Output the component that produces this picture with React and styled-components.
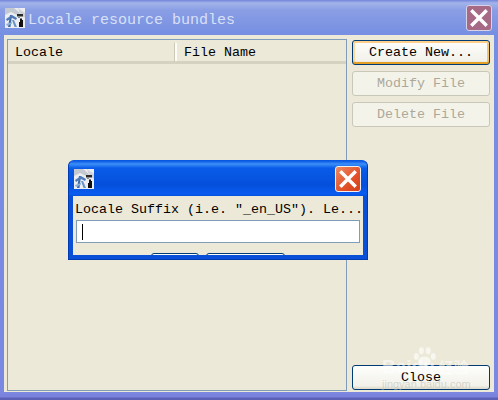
import React from "react";
import styled, { createGlobalStyle } from "styled-components";

const Global = createGlobalStyle`
  html, body {
    margin: 0;
    padding: 0;
    background: #7b8ee0;
  }
  * {
    box-sizing: border-box;
  }
`;

const AppIcon = () => (
  <svg width="20" height="20" viewBox="0 0 20 20">
    <rect width="20" height="20" fill="#eceef2" />
    <path d="M0 0h9l6 5-3 2-6-3-6 3z" fill="#c4c8d0" />
    <path d="M13 0l7 5v5l-5-4z" fill="#cfd2d9" />
    <path d="M3 19L5 7h2L5.5 19z" fill="#3f6ca8" />
    <path d="M1 11l6-4 5 3-1 2-4-2-5 3z" fill="#4f7cb8" />
    <path d="M7 12l2 0 3 7H9.5z" fill="#6a94c8" />
    <path d="M1 16l6-2v1.5L2 18z" fill="#8fb0d8" />
    <path d="M12 6h6v2.5h-6z" fill="#2a2a2a" />
    <path d="M15 10.5h2v1.5h1v7h-4v-5h1z" fill="#111" />
    <rect x="13" y="9" width="2" height="1" fill="#8a8a8a" />
  </svg>
);

const CloseIcon = () => (
  <svg width="20" height="20" viewBox="0 0 20 20">
    <path d="M3.5 3.5L16.5 16.5M16.5 3.5L3.5 16.5" stroke="#fff" strokeWidth="3.4" strokeLinecap="square" fill="none" />
  </svg>
);

const App = () => {
  return (
    <>
      <Global />
      <Frame>
        <TitleBar>
          <AppIcon />
          <TitleText>Locale resource bundles</TitleText>
          <MainClose>
            <CloseIcon />
          </MainClose>
        </TitleBar>
        <Body>
          <TablePanel>
            <TableHeader>
              <HeaderCell $width={169}>Locale</HeaderCell>
              <HeaderCell>File Name</HeaderCell>
            </TableHeader>
          </TablePanel>
          <Side>
            <Button $focused>Create New...</Button>
            <Button disabled>Modify File</Button>
            <Button disabled>Delete File</Button>
            <Spacer />
            <Button>Close</Button>
          </Side>
        </Body>
        <Dialog>
          <DialogTitle>
            <AppIcon />
            <DialogClose>
              <CloseIcon />
            </DialogClose>
          </DialogTitle>
          <DialogBody>
            <Prompt>Locale Suffix (i.e. "_en_US"). Le...</Prompt>
            <Field>
              <Caret />
            </Field>
            <DialogButtons>
              <ClippedButton $width={48} />
              <ClippedButton $width={79} />
            </DialogButtons>
          </DialogBody>
        </Dialog>
        <Watermark>
          <Paw viewBox="0 0 40 32">
            <ellipse cx="20" cy="23" rx="10" ry="8" />
            <ellipse cx="7" cy="15" rx="4" ry="5.5" />
            <ellipse cx="15" cy="6" rx="4" ry="5.5" />
            <ellipse cx="26" cy="6" rx="4" ry="5.5" />
            <ellipse cx="34" cy="15" rx="4" ry="5.5" />
          </Paw>
          <Brand>Baidu<BrandCjk>经验</BrandCjk></Brand>
          <BrandUrl>jingyan.baidu.com</BrandUrl>
        </Watermark>
      </Frame>
    </>
  );
};

const Frame = styled.div`
  position: relative;
  width: 498px;
  height: 400px;
  overflow: hidden;
  padding: 0 4px 8px;
  display: flex;
  flex-direction: column;
  background: linear-gradient(to bottom, #7285da 0, #a3b3ea 3px, #8a9ee4 10px, #768fe2 34px, #7a88e2 392px, #7a80dc 397px, #5c60b4 398px, #5c60b4 400px);
  font-family: "Liberation Mono", monospace;
  font-size: 13.33px;
  color: #000;
`;

const TitleBar = styled.div`
  height: 35px;
  flex: none;
  display: flex;
  align-items: center;
  padding: 1px 2px 0 1px;
`;

const TitleText = styled.div`
  margin: 4px 0 0 3px;
  font-size: 15px;
  color: #d8e0f6;
  white-space: nowrap;
`;

const MainClose = styled.div`
  margin-left: auto;
  width: 26px;
  height: 26px;
  display: flex;
  align-items: center;
  justify-content: center;
  border: 1px solid #d8d4e6;
  border-radius: 3px;
  background: #a66a86;
`;

const Body = styled.div`
  flex: 1;
  display: flex;
  background: #ece9d8;
  padding: 4px 4px 1px 3px;
`;

const TablePanel = styled.div`
  width: 341px;
  height: 352px;
  border: 1px solid #7f9db9;
`;

const TableHeader = styled.div`
  display: flex;
  height: 24px;
  border-bottom: 3px solid #d6d2c2;
`;

const HeaderCell = styled.div`
  width: ${(p) => (p.$width ? `${p.$width}px` : "auto")};
  flex: ${(p) => (p.$width ? "none" : 1)};
  padding: 2px 0 0 7px;
  margin: 3px 0 0;
  line-height: 15px;
  white-space: pre;
  ${(p) => p.$width && "border-right: 2px solid #fdfcf6; box-shadow: inset -1px 0 0 #cdc9b8;"}
`;

const Side = styled.div`
  flex: 1;
  display: flex;
  flex-direction: column;
  gap: 6px;
  margin-left: 5px;
  padding: 1px 0 1px;
`;

const Spacer = styled.div`
  flex: 1;
`;

const Button = styled.button`
  width: 138px;
  height: 25px;
  flex: none;
  padding: 0;
  font-family: inherit;
  font-size: 13.33px;
  color: #000;
  border-radius: 3px;
  border: 1px solid #003c74;
  background: linear-gradient(to bottom, #fefefc, #f2f1ea 85%, #dcd8c8);
  box-shadow: ${(p) => (p.$focused ? "inset 0 2px 0 #fed08c, inset 0 -2px 0 #e5a024, inset 2px 0 0 #fbd89a, inset -2px 0 0 #f3c46e" : "none")};

  &:disabled {
    color: #aca899;
    border-color: #c9c7ba;
    background: #f4f3ea;
  }
`;

const Dialog = styled.div`
  position: absolute;
  left: 68px;
  top: 160px;
  width: 300px;
  height: 100px;
  display: flex;
  flex-direction: column;
  padding: 0 4px 4px;
  border-radius: 6px 6px 0 0;
  background: #0a4fd8;
  border: 1px solid #003cb0;
  border-top-color: #0858e0;
`;

const DialogTitle = styled.div`
  height: 35px;
  flex: none;
  margin: 0 -4px;
  padding: 1px 6px 0 5px;
  display: flex;
  align-items: center;
  border-radius: 5px 5px 0 0;
  background: linear-gradient(to bottom, #0a58e4 0, #3c90f8 3px, #0a5ce8 7px, #0450dc 24px, #0a5cf0 33px, #0350dc 35px);
`;

const DialogClose = styled.div`
  margin-left: auto;
  width: 26px;
  height: 26px;
  display: flex;
  align-items: center;
  justify-content: center;
  border: 1px solid #f4f0f0;
  border-radius: 3px;
  background: linear-gradient(135deg, #ee8a60, #e2512a 60%, #d23f1c);
`;

const DialogBody = styled.div`
  flex: 1;
  overflow: hidden;
  background: #ece9d8;
  padding: 5px 3px 0;
`;

const Prompt = styled.div`
  height: 19px;
  margin-left: -1px;
  line-height: 17px;
  white-space: pre;
`;

const Field = styled.div`
  height: 23px;
  background: #fff;
  border: 1px solid #7f9db9;
  display: flex;
  align-items: center;
  padding-left: 5px;
`;

const Caret = styled.div`
  width: 1px;
  height: 16px;
  background: #000;
`;

const DialogButtons = styled.div`
  display: flex;
  justify-content: center;
  gap: 7px;
  margin-top: 10px;
  padding-right: 1px;
`;

const ClippedButton = styled.div`
  width: ${(p) => p.$width}px;
  height: 25px;
  flex: none;
  border: 1px solid #003c74;
  border-radius: 3px;
  background: linear-gradient(to bottom, #fefefc, #f2f1ea);
`;

const Watermark = styled.div`
  position: absolute;
  left: 382px;
  top: 346px;
  width: 90px;
  height: 44px;
  color: rgba(255, 255, 255, 0.55);
  font-family: "Liberation Sans", "Noto Sans CJK SC", sans-serif;
  pointer-events: none;
`;

const Paw = styled.svg`
  position: absolute;
  left: 29px;
  top: 1px;
  width: 27px;
  height: 20px;
  fill: rgba(255, 255, 255, 0.6);
`;

const Brand = styled.div`
  position: absolute;
  left: 0;
  top: 11px;
  font-size: 19px;
  line-height: 19px;
  font-weight: bold;
  white-space: nowrap;
`;

const BrandCjk = styled.span`
  margin-left: 4px;
  font-size: 15px;
`;

const BrandUrl = styled.div`
  position: absolute;
  left: 0;
  top: 32px;
  font-size: 11px;
  line-height: 12px;
  color: rgba(190, 188, 175, 0.55);
  white-space: nowrap;
`;

export default App;
